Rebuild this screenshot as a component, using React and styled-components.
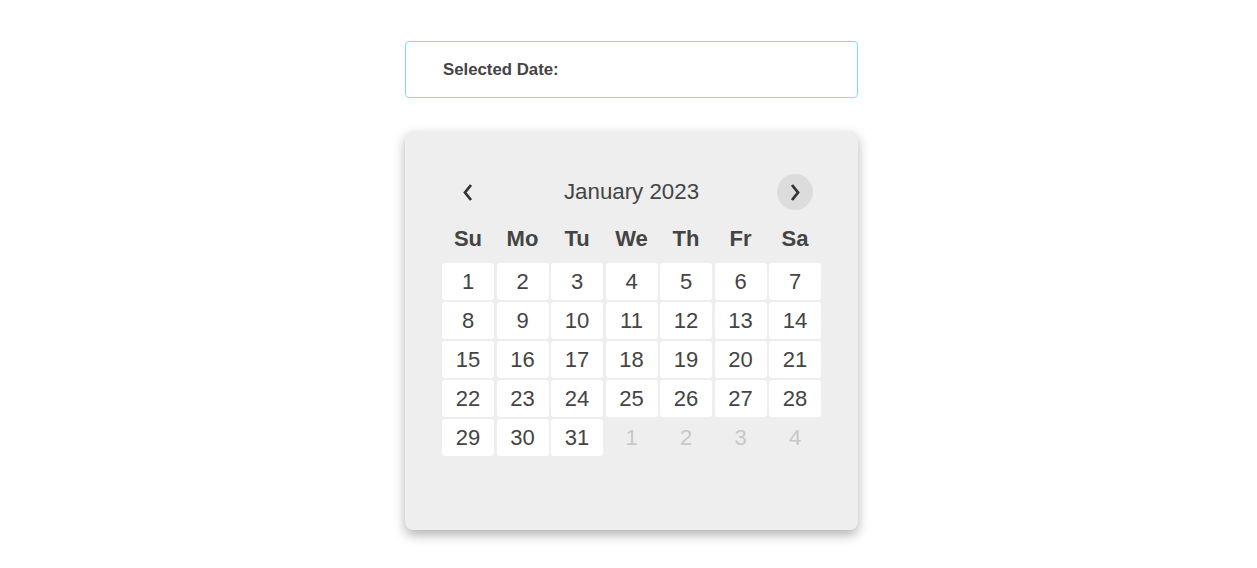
import React, { useState } from "react";
import styled, { createGlobalStyle } from "styled-components";

const GlobalStyle = createGlobalStyle`
  body {
    margin: 0;
    background: #fff;
    font-family: "Liberation Sans", Arial, sans-serif;
    color: #444;
  }
`;

const Page = styled.div`
  display: flex;
  flex-direction: column;
  align-items: center;
  padding: 41px 0 30px 6px;
  gap: 33px;
`;

const SelectedBox = styled.div`
  box-sizing: border-box;
  width: 453px;
  height: 57px;
  border: 1px solid #7fdcf2;
  border-radius: 4px;
  display: flex;
  align-items: center;
  padding-left: 37px;
  font-size: 16.8px;
  font-weight: bold;
  color: #444;
`;

const Card = styled.div`
  box-sizing: border-box;
  width: 453px;
  height: 399px;
  background: #eee;
  border-radius: 8px;
  box-shadow: 0 5px 12px rgba(0, 0, 0, 0.3);
  padding: 43px 37px 0;
`;

const Header = styled.div`
  display: flex;
  align-items: center;
  justify-content: space-between;
  padding: 0 8px;
  height: 36px;
`;

const NavButton = styled.button`
  width: 36px;
  height: 36px;
  border: none;
  border-radius: 50%;
  background: ${(p) => (p.$active ? "#dcdcdc" : "transparent")};
  display: flex;
  align-items: center;
  justify-content: center;
  padding: 0;
  cursor: pointer;
  &:hover {
    background: #dcdcdc;
  }
`;

const Title = styled.div`
  font-size: 22.3px;
  color: #444;
`;

const Weekdays = styled.div`
  display: grid;
  grid-template-columns: repeat(7, 52px);
  column-gap: 2.5px;
  margin-top: 16px;
  margin-bottom: 11px;
`;

const Weekday = styled.div`
  text-align: center;
  font-size: 22px;
  font-weight: bold;
  line-height: 26px;
  color: #444;
`;

const Days = styled.div`
  display: grid;
  grid-template-columns: repeat(7, 52px);
  grid-auto-rows: 37px;
  column-gap: 2.5px;
  row-gap: 2px;
`;

const Day = styled.div`
  display: flex;
  align-items: center;
  justify-content: center;
  border-radius: 3px;
  font-size: 22px;
  background: ${(p) => (p.$muted ? "transparent" : "#fff")};
  color: ${(p) => (p.$muted ? "#c8c8c8" : "#444")};
  cursor: ${(p) => (p.$muted ? "default" : "pointer")};
`;

const Chevron = ({ dir }) => (
  <svg width="12" height="18" viewBox="0 0 12 18">
    <path
      d={dir === "left" ? "M9 2 L3 9.5 L9 17" : "M3 2 L9 9.5 L3 17"}
      fill="none"
      stroke="#333"
      strokeWidth="2.8"
    />
  </svg>
);

const WEEKDAYS = ["Su", "Mo", "Tu", "We", "Th", "Fr", "Sa"];

export default function App() {
  const [selected, setSelected] = useState(null);
  const days = [];
  for (let i = 1; i <= 31; i++) days.push({ n: i, muted: false });
  for (let i = 1; i <= 4; i++) days.push({ n: i, muted: true });

  return (
    <>
      <GlobalStyle />
      <Page>
        <SelectedBox>
          Selected Date:{selected ? ` January ${selected}, 2023` : ""}
        </SelectedBox>
        <Card>
          <Header>
            <NavButton aria-label="Previous month">
              <Chevron dir="left" />
            </NavButton>
            <Title>January 2023</Title>
            <NavButton $active aria-label="Next month">
              <Chevron dir="right" />
            </NavButton>
          </Header>
          <Weekdays>
            {WEEKDAYS.map((d) => (
              <Weekday key={d}>{d}</Weekday>
            ))}
          </Weekdays>
          <Days>
            {days.map((d, i) => (
              <Day
                key={i}
                $muted={d.muted}
                onClick={() => !d.muted && setSelected(d.n)}
              >
                {d.n}
              </Day>
            ))}
          </Days>
        </Card>
      </Page>
    </>
  );
}
